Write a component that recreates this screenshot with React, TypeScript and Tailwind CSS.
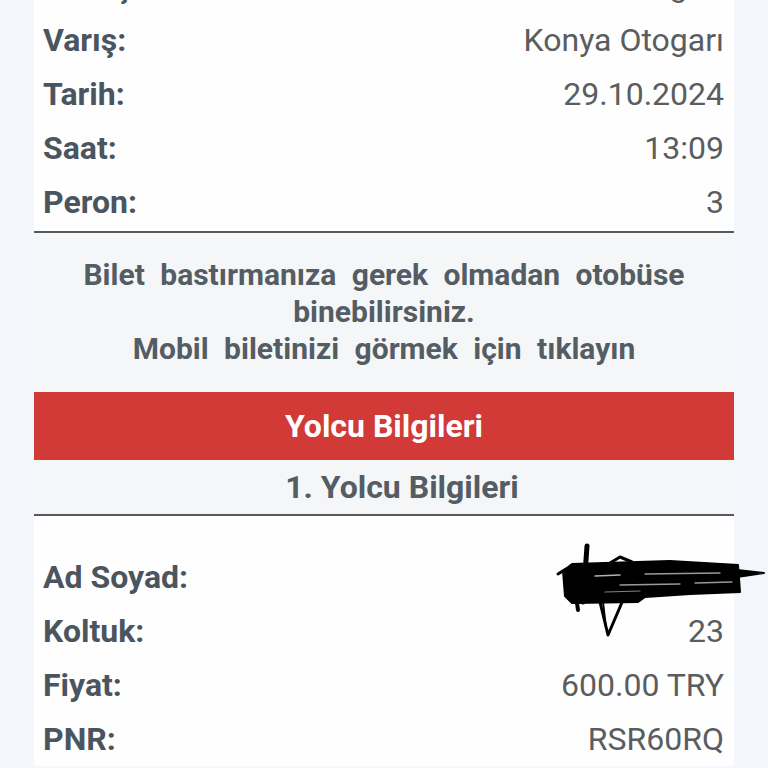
import React from "react";

const rowsTop = [
  ["Kalkış:", "Adana Otogarı"],
  ["Varış:", "Konya Otogarı"],
  ["Tarih:", "29.10.2024"],
  ["Saat:", "13:09"],
  ["Peron:", "3"],
];

const rowsBottom = [
  ["Ad Soyad:", ""],
  ["Koltuk:", "23"],
  ["Fiyat:", "600.00 TRY"],
  ["PNR:", "RSR60RQ"],
];

function Row({ label, value }: { label: string; value: string }) {
  return (
    <div className="flex h-[54px] items-center justify-between pl-[9px] pr-[10px] text-[32px] leading-[54px]">
      <span className="font-bold text-[#4b5560]">{label}</span>
      <span className="text-[#5a5d60]">{value}</span>
    </div>
  );
}

function Scribble() {
  return (
    <svg
      className="pointer-events-none absolute left-[516px] top-[-10px]"
      width="218"
      height="100"
      viewBox="0 0 218 100"
      fill="none"
      stroke="#000"
      strokeLinecap="round"
      strokeLinejoin="round"
    >
      <path d="M13 31 L22 24 L120 21 L188 25 L190 52 L140 54 L95 57 L88 62 L22 63 L15 56 Z" fill="#000" strokeWidth="2" />
      <path d="M187 30 L214 33 L187 37 Z" fill="#000" strokeWidth="2" />
      <path d="M8 34 L16 29" strokeWidth="3" />
      <path d="M37 6 L33 62" strokeWidth="5" />
      <path d="M26 56 L28 70" strokeWidth="4" />
      <path d="M50 62 L58 95 L73 60" strokeWidth="3" />
      <path d="M53 62 L56 88" strokeWidth="2" />
      <path d="M60 23 L70 17 L82 22" strokeWidth="3" />
      <path d="M45 36 L70 35" stroke="#ffffff" strokeWidth="1.5" opacity="0.7" />
      <path d="M95 34 L170 33" stroke="#ffffff" strokeWidth="1.3" opacity="0.6" />
      <path d="M70 45 L130 44" stroke="#ffffff" strokeWidth="1.3" opacity="0.6" />
      <path d="M145 43 L182 42" stroke="#ffffff" strokeWidth="1.3" opacity="0.6" />
      <path d="M55 52 L90 51" stroke="#ffffff" strokeWidth="1.2" opacity="0.5" />
    </svg>
  );
}

export default function App() {
  return (
    <div
      className="h-[768px] w-[768px] overflow-hidden bg-[#f3f6fa]"
      style={{ fontFamily: "Roboto, 'Liberation Sans', sans-serif" }}
    >
      <div className="ml-[34px] mt-[-41px] w-[700px] bg-[#fefefe]">
        <div className="pb-[2px]">
          {rowsTop.map(([l, v]) => (
            <Row key={l} label={l} value={v} />
          ))}
        </div>
        <div className="h-[2px] bg-[#555a5e]" />
        <div className="bg-[#f5f6f7] px-2 pb-[25px] pt-[23px] text-center text-[30px] font-bold leading-[37px] text-[#545c64] [word-spacing:8px]">
          Bilet bastırmanıza gerek olmadan otobüse
          <br />
          binebilirsiniz.
          <br />
          Mobil biletinizi görmek için tıklayın
        </div>
        <div className="flex h-[68px] items-center justify-center bg-[#d13a37] text-[32px] font-bold text-white">
          Yolcu Bilgileri
        </div>
        <div className="h-[54px] bg-[#f5f6f7] pl-[36px] text-center text-[32px] font-bold leading-[54px] text-[#545c64]">
          1. Yolcu Bilgileri
        </div>
        <div className="h-[2px] bg-[#555a5e]" />
        <div className="pt-[34px]">
          {rowsBottom.map(([l, v]) => (
            <div key={l} className="relative">
              <Row label={l} value={v} />
              {l === "Ad Soyad:" && <Scribble />}
            </div>
          ))}
        </div>
      </div>
    </div>
  );
}
